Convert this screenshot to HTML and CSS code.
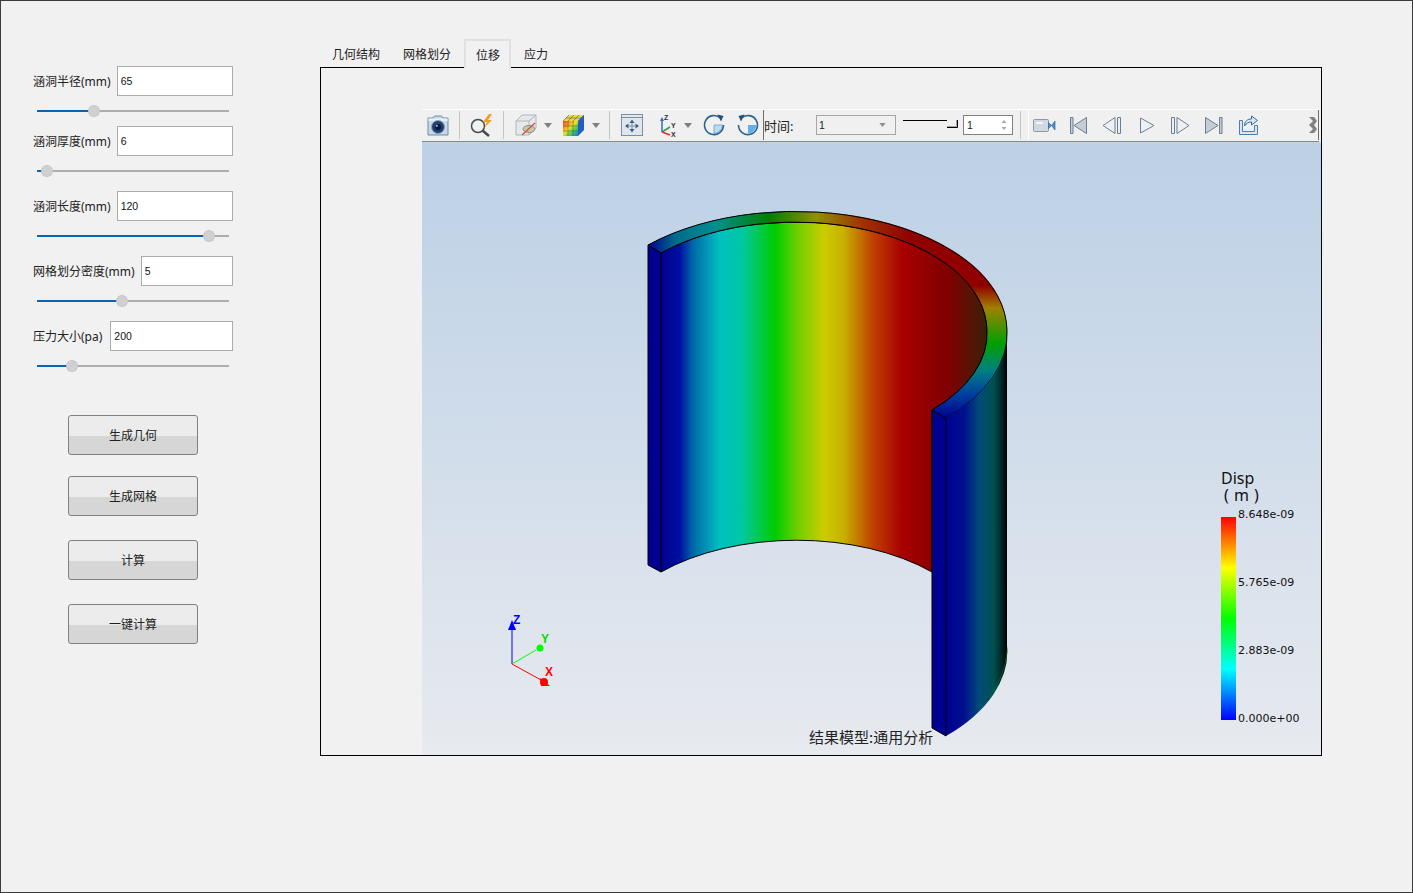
FILE: index.html
```html
<!DOCTYPE html>
<html lang="zh">
<head>
<meta charset="utf-8">
<title>涵洞分析</title>
<link rel="stylesheet" href="styles.css">
</head>
<body>
<div class="window">
  <aside class="sidebar">
    <div class="field">
      <div class="field-row"><label class="field-label">涵洞半径(mm)</label><input class="field-input" value="65"></div>
      <div class="slider"><div class="slider-fill" style="width:57px"></div></div>
    </div>
    <div class="field">
      <div class="field-row"><label class="field-label">涵洞厚度(mm)</label><input class="field-input" value="6"></div>
      <div class="slider"><div class="slider-fill" style="width:10px"></div></div>
    </div>
    <div class="field">
      <div class="field-row"><label class="field-label">涵洞长度(mm)</label><input class="field-input" value="120"></div>
      <div class="slider"><div class="slider-fill" style="width:172px"></div></div>
    </div>
    <div class="field">
      <div class="field-row"><label class="field-label">网格划分密度(mm)</label><input class="field-input" value="5"></div>
      <div class="slider"><div class="slider-fill" style="width:85px"></div></div>
    </div>
    <div class="field">
      <div class="field-row"><label class="field-label field-label-short">压力大小(pa)</label><input class="field-input" value="200"></div>
      <div class="slider"><div class="slider-fill" style="width:35px"></div></div>
    </div>
    <div class="actions">
      <button class="action action-first">生成几何</button>
      <button class="action">生成网格</button>
      <button class="action">计算</button>
      <button class="action">一键计算</button>
    </div>
  </aside>

  <main class="main">
    <nav class="tabs">
      <div class="tab tab-a">几何结构</div>
      <div class="tab tab-b">网格划分</div>
      <div class="tab tab-active">位移</div>
      <div class="tab tab-d">应力</div>
    </nav>
    <section class="pane">
      <div class="viewport">
        <div class="toolbar">
          <svg class="ic m4" viewBox="0 0 24 24"><path d="M2 5h5l1.500-2h7L17 5h5v17H2z" fill="#c9d8e6" stroke="#6f8ba6"/><rect x="2.500" y="5.500" width="19" height="2.500" fill="#e8eff5"/><circle cx="12" cy="14" r="6.500" fill="#1f3f73" stroke="#8ca5bf"/><circle cx="12" cy="14" r="3" fill="#07142f"/><circle cx="10.800" cy="12.800" r="1.100" fill="#9fc0e0"/></svg>
          <span class="sep m9"></span>
          <svg class="ic m9" viewBox="0 0 24 24"><circle cx="9" cy="13" r="6.500" fill="#eef2f5" stroke="#4a4a4a" stroke-width="1.500"/><path d="M13.500 17.500L20 23" stroke="#4a4a4a" stroke-width="2.500"/><path d="M20 1l-6 8h4l-3 6 8-8h-4l4-6z" fill="#f0a020"/></svg>
          <span class="sep m10"></span>
          <svg class="ic m10" viewBox="0 0 24 24"><path d="M2 8l6-6h14v13l-7 7H2z" fill="#e6e9ec" stroke="#b0b5ba"/><path d="M2 8h13v14M15 8l7-6" fill="none" stroke="#b0b5ba"/><ellipse cx="15" cy="16" rx="6" ry="3.500" fill="#c8c8a8" stroke="#8a8f80"/><path d="M8 22L21 10" stroke="#d0503a" stroke-width="1.200"/></svg>
          <svg class="arrow m6" viewBox="0 0 8 5"><path d="M0 0h8L4 5z" fill="#808080"/></svg>
          <svg class="ic m9" viewBox="0 0 24 24"><path d="M2 8l6-6h15l-6 6z" fill="#e8d84a"/><path d="M2 8h15v15H2z" fill="url(#cubeFace)"/><path d="M17 8l6-6v15l-6 6z" fill="#1f5fd0"/><path d="M2 13h15M2 18h15M7 8v15M12 8v15M17 8l6-6M8 2l-6 6M13 2L7 8M18 2l-6 6M5 5h15M17 13l6-6M17 18l6-6" stroke="#4a4a4a" stroke-width=".5" fill="none"/><defs><linearGradient id="cubeFace" x1="0" x2="1" y1="0" y2="1"><stop offset="0" stop-color="#f03820"/><stop offset=".45" stop-color="#f8e020"/><stop offset=".7" stop-color="#38d060"/><stop offset="1" stop-color="#2070e0"/></linearGradient></defs></svg>
          <svg class="arrow m7" viewBox="0 0 8 5"><path d="M0 0h8L4 5z" fill="#808080"/></svg>
          <span class="sep m9"></span>
          <svg class="ic m10" viewBox="0 0 24 24"><rect x="1.500" y="1.500" width="21" height="21" fill="#dfe6ee" stroke="#7f8fa3"/><path d="M2 4.500h20" stroke="#7f8fa3"/><path d="M12 6.500L9.500 10h5zM12 19.500L9.500 16h5zM5 13l3.500-2.500v5zM19 13l-3.500-2.500v5z" fill="#3f5f80"/><path d="M12 10v6M8 13h8" stroke="#7f8fa3"/></svg>
          <svg class="ic m11" viewBox="0 0 24 24"><path d="M7 7v12" stroke="#2f6fc0" stroke-width="1.500"/><path d="M7 19l8-5" stroke="#30a050" stroke-width="1.500"/><path d="M7 19l8 3" stroke="#e03030" stroke-width="1.500"/><path d="M7 4L5 8h4z" fill="#2f6fc0"/><text class="axis-mini" x="9" y="7">Z</text><text class="axis-mini" x="16" y="15">Y</text><text class="axis-mini" x="16" y="24">X</text></svg>
          <svg class="arrow m5" viewBox="0 0 8 5"><path d="M0 0h8L4 5z" fill="#808080"/></svg>
          <svg class="ic m10" viewBox="0 0 24 24"><path d="M12 12h8.500a9 9 0 0 1-8.500 8.500z" fill="#bcdcf4" stroke="#5fa0d0" stroke-width=".8"/><path d="M18.700 5.300A9.500 9.500 0 1 0 21.500 12" fill="none" stroke="#2a6090" stroke-width="1.600"/><path d="M15.500 1.500l6 1.500-2.500 5.500z" fill="#1f5080"/></svg>
          <svg class="ic m10" viewBox="0 0 24 24"><path d="M12 12h8.500a9 9 0 0 1-8.500 8.500z" fill="#5fb0ec"/><path d="M5.300 5.300A9.500 9.500 0 1 1 2.500 12" fill="none" stroke="#2a6090" stroke-width="1.600"/><path d="M8.500 1.500l-6 1.500 2.500 5.500z" fill="#1f5080"/></svg>
          <span class="sep sep-dark m3"></span>
          <span class="time-label">时间:</span>
          <div class="combo"><span>1</span><svg class="combo-arrow" viewBox="0 0 8 5"><path d="M0 0h8L4 5z" fill="#909090"/></svg></div>
          <svg class="time-slider m6" viewBox="0 0 56 20"><path d="M1 5.500h44" stroke="#000"/><path d="M45 12.500h10.500V5" fill="none" stroke="#000"/><path d="M45 11.500h9.500V5" fill="none" stroke="#a0a0a0"/></svg>
          <div class="spin m5"><span>1</span><svg class="spin-arrows" viewBox="0 0 6 12"><path d="M3 1l2.500 3h-5zM3 11L.5 8h5z" fill="#a8a8a8"/></svg></div>
          <span class="sep m7"></span>
          <div class="player">
            <svg class="ic m4" viewBox="0 0 24 24"><rect x="1.500" y="6.500" width="15" height="12" rx="1" fill="#d0d8e0" stroke="#8c99a8"/><rect x="4" y="9" width="7" height="2" fill="#f4f6f8"/><path d="M16.500 9.500l3 3-3 3zM23 8l-3.500 4.500L23 17z" fill="#4f90c8" stroke="#3a6a98" stroke-width=".7"/></svg>
            <svg class="ic m10" viewBox="0 0 24 24"><path d="M4.500 4.500h2.500v16H4.500z" fill="#c5ccd4" stroke="#6b7f94"/><path d="M20.500 4.500v16L8 12.500z" fill="#c5ccd4" stroke="#6b7f94"/></svg>
            <svg class="ic m10" viewBox="0 0 24 24"><path d="M15 4.500v16L3 12.500z" fill="#eef1f4" stroke="#6b7f94"/><path d="M17.500 4.500h3v16h-3z" fill="#eef1f4" stroke="#6b7f94"/></svg>
            <svg class="ic m11" viewBox="0 0 24 24"><path d="M5.500 5v15L19 12.500z" fill="#eef1f4" stroke="#6b7f94"/></svg>
            <svg class="ic m9" viewBox="0 0 24 24"><path d="M9 4.500v16L21 12.500z" fill="#eef1f4" stroke="#6b7f94"/><path d="M3.500 4.500h3v16h-3z" fill="#eef1f4" stroke="#6b7f94"/></svg>
            <svg class="ic m10" viewBox="0 0 24 24"><path d="M17.500 4.500H20v16h-2.500z" fill="#c5ccd4" stroke="#6b7f94"/><path d="M3.500 4.500v16L16 12.500z" fill="#c5ccd4" stroke="#6b7f94"/></svg>
            <svg class="ic m10" viewBox="0 0 24 24"><path d="M3.500 7.500v14h18v-9h-3v6H6.500V7.500z" fill="#dbe6f0" stroke="#4f7fa8"/><path d="M8.500 13c0-5 3-7 7-7V3l6 4.500-6 4.500V9c-3 0-5 1-7 4z" fill="#dbe6f0" stroke="#2f6a98"/></svg>
            <svg class="grip" viewBox="0 0 10 18"><path d="M1 1h5l3 4-3 4 3 4-3 4H1l4-4-4-4 4-4z" fill="#808080"/></svg>
          </div>
        </div>
        <svg class="scene" viewBox="422 142 899 613">
          <defs>
            <linearGradient id="wall" gradientUnits="userSpaceOnUse" x1="661" x2="987" y1="0" y2="0">
              <stop offset="0" stop-color="#000090"/>
              <stop offset=".058" stop-color="#0010a0"/>
              <stop offset=".098" stop-color="#0068a8"/>
              <stop offset=".18" stop-color="#00c0c0"/>
              <stop offset=".25" stop-color="#00c8a0"/>
              <stop offset=".35" stop-color="#00cc00"/>
              <stop offset=".42" stop-color="#70d000"/>
              <stop offset=".5" stop-color="#cccc00"/>
              <stop offset=".56" stop-color="#c8b000"/>
              <stop offset=".65" stop-color="#c04000"/>
              <stop offset=".74" stop-color="#a80000"/>
              <stop offset=".88" stop-color="#800000"/>
              <stop offset="1" stop-color="#3a2008"/>
            </linearGradient>
            <linearGradient id="ringTop" gradientUnits="userSpaceOnUse" x1="648" x2="985" y1="0" y2="0">
              <stop offset="0" stop-color="#000090"/>
              <stop offset=".08" stop-color="#006a8a"/>
              <stop offset=".2" stop-color="#008f8f"/>
              <stop offset=".36" stop-color="#008000"/>
              <stop offset=".5" stop-color="#909000"/>
              <stop offset=".64" stop-color="#a03000"/>
              <stop offset=".78" stop-color="#900000"/>
              <stop offset="1" stop-color="#900000"/>
            </linearGradient>
            <linearGradient id="ringSide" gradientUnits="userSpaceOnUse" x1="0" x2="0" y1="277" y2="418">
              <stop offset="0" stop-color="#900000"/>
              <stop offset=".06" stop-color="#900000"/>
              <stop offset=".22" stop-color="#a08000"/>
              <stop offset=".47" stop-color="#00a000"/>
              <stop offset=".66" stop-color="#008080"/>
              <stop offset=".83" stop-color="#0040a0"/>
              <stop offset="1" stop-color="#000090"/>
            </linearGradient>
            <linearGradient id="outer" gradientUnits="userSpaceOnUse" x1="946" x2="1007" y1="0" y2="0">
              <stop offset="0" stop-color="#000090"/>
              <stop offset=".3" stop-color="#001090"/>
              <stop offset=".55" stop-color="#004c78"/>
              <stop offset=".78" stop-color="#005050"/>
              <stop offset=".93" stop-color="#002020"/>
              <stop offset="1" stop-color="#000000"/>
            </linearGradient>
            <linearGradient id="scale" x1="0" x2="0" y1="0" y2="1">
              <stop offset="0" stop-color="#ff0000"/>
              <stop offset=".25" stop-color="#ffff00"/>
              <stop offset=".5" stop-color="#00ff00"/>
              <stop offset=".75" stop-color="#00ffff"/>
              <stop offset="1" stop-color="#0000ff"/>
            </linearGradient>
          </defs>
          <path d="M661 253A192 109 0 0 1 987 330A192 109 0 0 1 932 410L932 572A192 109 0 0 0 661 572Z" fill="url(#wall)" stroke="#000"/>
          <path d="M648 245A212 120 0 0 1 1007 330L987 330A192 109 0 0 0 661 253Z" fill="#900000"/>
          <path d="M648 245A212 120 0 0 1 985 277L967 282A192 109 0 0 0 661 253Z" fill="url(#ringTop)"/>
          <path d="M985 277A212 120 0 0 1 1007 330A212 120 0 0 1 946 418L932 410A192 109 0 0 0 987 330A192 109 0 0 0 967 282Z" fill="url(#ringSide)"/>
          <path d="M648 245A212 120 0 0 1 1007 330A212 120 0 0 1 946 418L932 410A192 109 0 0 0 987 330A192 109 0 0 0 661 253Z" fill="none" stroke="#000"/>
          <path d="M946 418A212 120 0 0 0 1007 330L1007 645A212 120 0 0 1 946 736Z" fill="url(#outer)"/>
          <path d="M1007 650C1006 668 998 686 990 696" fill="none" stroke="#0a8a20" stroke-width=".5"/>
          <path d="M648 245L661 253L661 572L648 565Z" fill="#000090" stroke="#000"/>
          <path d="M932 410L946 418L946 736L932 728Z" fill="#000090" stroke="#000"/>

          <path d="M512 664V626" stroke="#0000ff"/>
          <path d="M512 664L536 650" stroke="#00ff00"/>
          <path d="M512 664L541 680" stroke="#ff0000"/>
          <path d="M512 620L508 630H516Z" fill="#0000ff"/>
          <circle cx="540" cy="648" r="3.500" fill="#00ff00"/>
          <path d="M540 678L550 686H541Z" fill="#ff0000"/>
          <circle cx="544" cy="682" r="4" fill="#ff0000"/>
          <text class="axis axis-z" x="513" y="624">Z</text>
          <text class="axis axis-y" x="541" y="643">Y</text>
          <text class="axis axis-x" x="545" y="676">X</text>

          <text class="caption" x="809" y="743">结果模型:通用分析</text>

          <text class="legend-title" x="1221" y="484">Disp</text>
          <text class="legend-title legend-unit" x="1224" y="501">( m )</text>
          <rect x="1221" y="517" width="15" height="203" fill="url(#scale)"/>
          <text class="legend-value" x="1238" y="518">8.648e-09</text>
          <text class="legend-value" x="1238" y="586">5.765e-09</text>
          <text class="legend-value" x="1238" y="654">2.883e-09</text>
          <text class="legend-value" x="1238" y="722">0.000e+00</text>
        </svg>
      </div>
    </section>
  </main>
</div>
</body>
</html>
```

FILE: styles.css
```css
* { box-sizing: border-box; }
html, body { margin: 0; height: 100%; }
body {
  font-family: "Noto Sans", "Noto Sans CJK SC", sans-serif;
  font-size: 12px;
  color: #222;
  background: #f0f0f0;
}
.window {
  display: flex;
  width: 1413px;
  height: 893px;
  border: 1px solid #3c3c3c;
  background: #f1f1f1;
}

/* Left parameter column */
.sidebar {
  width: 319px;
  flex: none;
  padding: 65px 0 0 32px;
}
.field { width: 200px; height: 50px; margin-bottom: 15px; }
.field:first-child { margin-bottom: 10px; }
.field-row { display: flex; align-items: center; gap: 6px; height: 30px; }
.field-label { white-space: nowrap; line-height: 30px; padding-top: 2px; }
.field-label-short { margin-right: 2px; }
.field-input {
  flex: 1;
  min-width: 0;
  height: 30px;
  padding: 0 3px;
  border: 1px solid #ababab;
  background: #fff;
  font-family: "Liberation Sans", sans-serif;
  font-size: 10.5px;
  color: #111;
}
.slider {
  width: 192px;
  height: 2px;
  margin: 14px 0 0 4px;
  background: #adadad;
}
.slider-fill { position: relative; height: 2px; background: #0a64b4; }
.slider-fill::after {
  content: "";
  position: absolute;
  right: -6px;
  top: -5px;
  width: 10px;
  height: 10px;
  border-radius: 50%;
  background: #d0d0d0;
  border: 1px dotted #bdbdbd;
}
.actions { display: flex; flex-direction: column; gap: 24px; width: 130px; margin: 44px 0 0 35px; }
.action {
  height: 40px;
  padding: 0;
  border: 1px solid #808080;
  border-radius: 3px;
  background: linear-gradient(#ececec 0 52%, #d6d6d6 52% 100%);
  font: inherit;
  color: #222;
}
.action-first { margin-bottom: -3px; }

/* Tabs and pane */
.main { width: 1002px; flex: none; padding-top: 38px; }
.tabs { display: flex; height: 29px; position: relative; z-index: 1; }
.tab { line-height: 30px; padding-top: 1px; white-space: nowrap; }
.tab-a { width: 72px; padding-left: 12px; }
.tab-b { width: 72px; padding-left: 11px; }
.tab-active {
  width: 47px;
  padding-left: 10px;
  margin-right: 1px;
  padding-top: 0;
  border: 2px solid #e1e1e1;
  border-bottom: 0;
  background: #f1f1f1;
  height: 29px;
}
.tab-d { padding-left: 12px; }
.pane {
  height: 689px;
  margin-top: -1px;
  padding: 41px 0 0 101px;
  border: 1px solid #000;
}
.viewport { width: 899px; height: 646px; }

/* Toolbar */
.toolbar {
  display: flex;
  align-items: center;
  width: 897px;
  height: 33px;
  padding-bottom: 1px;
  border-top: 1px solid #fff;
  border-bottom: 1px solid #8a8a8a;
  background: #f0f0f0;
}
.ic { width: 24px; height: 24px; flex: none; }
.arrow { width: 8px; height: 5px; flex: none; }
.sep { width: 1px; height: 28px; flex: none; background: #c4c4c4; }
.sep-dark { height: 30px; background: #6e6e6e; }
.m3 { margin-left: 3px; }
.m4 { margin-left: 4px; }
.m5 { margin-left: 5px; }
.m6 { margin-left: 6px; }
.m7 { margin-left: 7px; }
.m9 { margin-left: 9px; }
.m10 { margin-left: 10px; }
.m11 { margin-left: 11px; }
.axis-mini { font: bold 7px "Liberation Sans", sans-serif; fill: #333; }
.time-label { width: 52px; flex: none; font-size: 13px; }
.combo {
  display: flex;
  align-items: center;
  justify-content: space-between;
  width: 80px;
  height: 20px;
  flex: none;
  padding: 0 9px 0 2px;
  border: 1px solid #a6a6a6;
  font: 10.5px "Liberation Sans", sans-serif;
}
.combo-arrow { width: 7px; height: 4px; }
.time-slider { width: 56px; height: 20px; flex: none; }
.spin {
  display: flex;
  align-items: center;
  justify-content: space-between;
  width: 50px;
  height: 20px;
  flex: none;
  padding: 0 5px 0 3px;
  border: 1px solid #808080;
  background: #fff;
  font: 10.5px "Liberation Sans", sans-serif;
}
.spin-arrows { width: 6px; height: 12px; }
.player {
  display: flex;
  align-items: center;
  flex: 1;
  height: 30px;
  margin-left: 7px;
  border-left: 1px solid #fff;
  border-right: 1px solid #6e6e6e;
}
.player .ic:first-child { margin-left: 3px; }
.grip { width: 10px; height: 18px; margin-left: auto; }

/* 3D scene */
.scene {
  display: block;
  width: 899px;
  height: 613px;
  background: linear-gradient(#bcd0e6, #e7eaef);
}
.axis { font: bold 12px "Liberation Sans", sans-serif; }
.axis-z { fill: #0000ff; }
.axis-y { fill: #00e000; }
.axis-x { fill: #ff0000; }
.caption { font: 15px "Noto Sans CJK SC", sans-serif; fill: #222; }
.legend-title { font: 16px "Noto Sans", sans-serif; fill: #111; }
.legend-unit { word-spacing: 1px; }
.legend-value { font: 11px "DejaVu Sans", sans-serif; fill: #111; }
```
